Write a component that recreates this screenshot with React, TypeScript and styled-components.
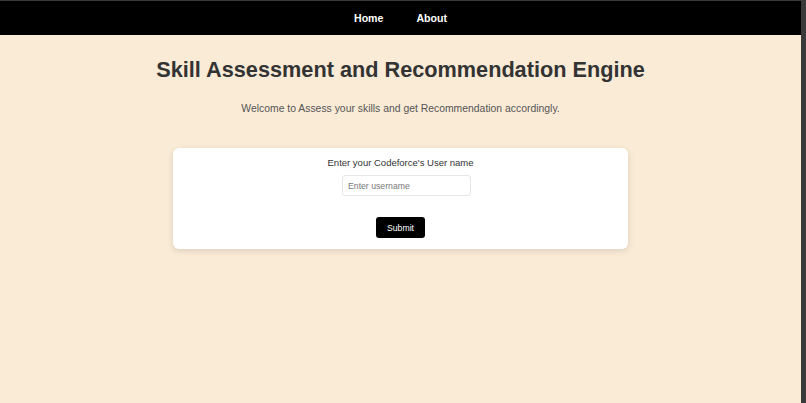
import React from "react";
import styled, { createGlobalStyle } from "styled-components";

const Global = createGlobalStyle`
  html, body { margin: 0; padding: 0; height: 100%; }
  body { background: #faebd7; font-family: "Liberation Sans", Arial, sans-serif; }
  #root { min-height: 100%; }
`;

const Frame = styled.div`
  min-height: 403px;
  box-sizing: border-box;
  border-top: 1px solid #3a3a3a;
  border-right: 5px solid #3a3a3a;
  background: #faebd7;
`;

const Nav = styled.nav`
  height: 34px;
  background: #000;
  display: flex;
  justify-content: center;
  align-items: center;
  gap: 33px;
`;

const NavLink = styled.a`
  color: #fff;
  font-weight: bold;
  font-size: 10.6px;
  text-decoration: none;
`;

const Main = styled.main`
  display: flex;
  flex-direction: column;
  align-items: center;
  padding-top: 22px;
`;

const Title = styled.h1`
  margin: 0;
  font-size: 21.7px;
  line-height: 26px;
  color: #333;
  font-weight: bold;
`;

const Subtitle = styled.p`
  margin: 19px 0 0;
  font-size: 10.4px;
  line-height: 14px;
  color: #555;
`;

const Card = styled.div`
  margin-top: 32px;
  width: 455px;
  box-sizing: border-box;
  background: #fff;
  border-radius: 6px;
  box-shadow: 0 2px 6px rgba(0, 0, 0, 0.12);
  padding: 8px 0 11px;
  display: flex;
  flex-direction: column;
  align-items: center;
`;

const Label = styled.label`
  font-size: 9.5px;
  line-height: 13px;
  color: #333;
`;

const Input = styled.input`
  margin-top: 6px;
  margin-left: 12px;
  width: 129px;
  height: 21px;
  box-sizing: border-box;
  border: 1px solid #e6e6e6;
  border-radius: 3px;
  padding: 0 5px;
  font-size: 8.7px;
  font-family: "Liberation Sans", Arial, sans-serif;
  outline: none;
  &::placeholder { color: #777; }
`;

const Button = styled.button`
  margin-top: 21px;
  width: 49px;
  height: 21px;
  padding: 0;
  background: #000;
  color: #fff;
  border: none;
  border-radius: 3px;
  font-size: 8.7px;
  font-family: "Liberation Sans", Arial, sans-serif;
  cursor: pointer;
`;

export default function App() {
  return (
    <>
      <Global />
      <Frame>
        <Nav>
          <NavLink href="#">Home</NavLink>
          <NavLink href="#">About</NavLink>
        </Nav>
        <Main>
          <Title>Skill Assessment and Recommendation Engine</Title>
          <Subtitle>Welcome to Assess your skills and get Recommendation accordingly.</Subtitle>
          <Card>
            <Label>Enter your Codeforce's User name</Label>
            <Input placeholder="Enter username" />
            <Button>Submit</Button>
          </Card>
        </Main>
      </Frame>
    </>
  );
}
